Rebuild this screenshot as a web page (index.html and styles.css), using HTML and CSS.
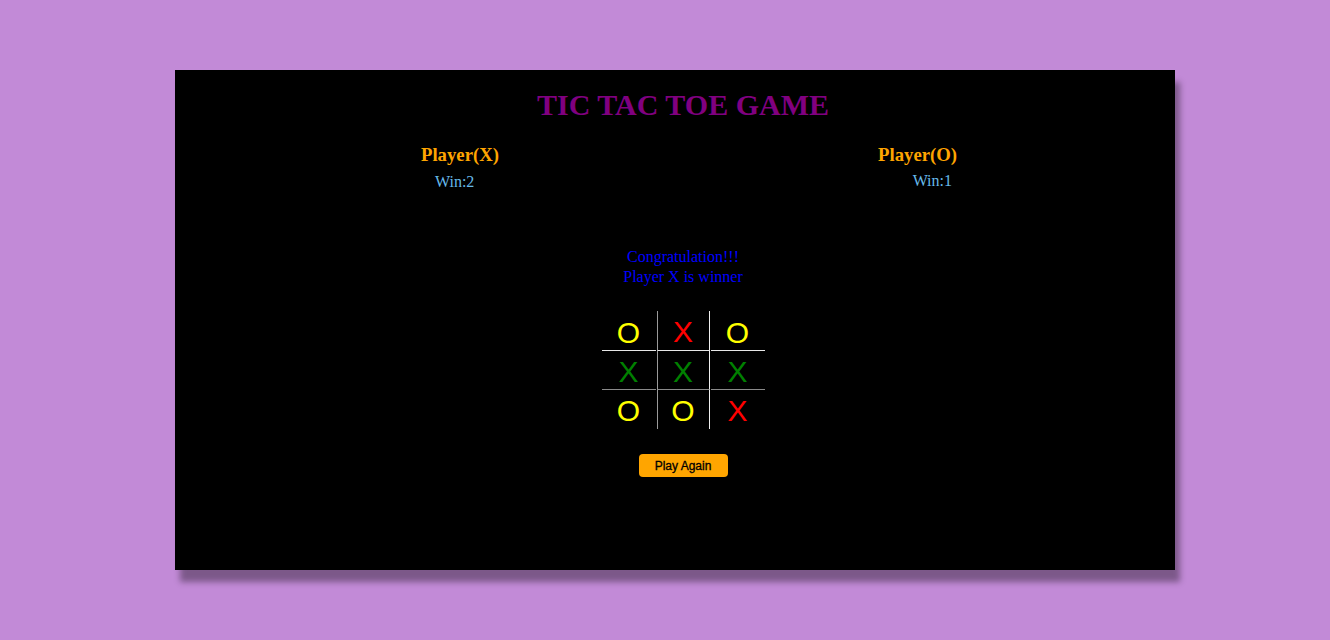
FILE: index.html
```html
<!DOCTYPE html>
<html>
<head>
<meta charset="utf-8">
<title>Tic Tac Toe</title>
<link rel="stylesheet" href="styles.css">
</head>
<body>
<div class="game">
  <h1 class="title">TIC TAC TOE GAME</h1>
  <div class="players">
    <div class="player player-x">
      <h3 class="player-name">Player(X)</h3>
      <div class="wins">Win:2</div>
    </div>
    <div class="player player-o">
      <h3 class="player-name">Player(O)</h3>
      <div class="wins">Win:1</div>
    </div>
  </div>
  <div class="center">
    <div class="message">Congratulation!!!<br>Player X is winner</div>
    <div class="board">
      <div class="cell c1 r1 o">O</div>
      <div class="cell c2 r1 xr">X</div>
      <div class="cell c3 r1 o">O</div>
      <div class="cell c1 r2 xg">X</div>
      <div class="cell c2 r2 xg">X</div>
      <div class="cell c3 r2 xg">X</div>
      <div class="cell c1 r3 o">O</div>
      <div class="cell c2 r3 o">O</div>
      <div class="cell c3 r3 xr">X</div>
    </div>
    <button class="again">Play Again</button>
  </div>
</div>
</body>
</html>
```

FILE: styles.css
```css
html, body {
  margin: 0;
  padding: 0;
}
body {
  background: #c28ad7;
  font-family: "Liberation Serif", "Times New Roman", serif;
  width: 1330px;
  height: 640px;
  overflow: hidden;
}
.game {
  box-sizing: border-box;
  width: 1000px;
  height: 500px;
  margin: 70px auto 0 175px;
  background: #000;
  box-shadow: 5px 12px 6px rgba(0, 0, 0, 0.36);
  display: flex;
  flex-direction: column;
  padding-top: 18px;
}
.title {
  margin: 0 0 0 16px;
  text-align: center;
  font-size: 30px;
  font-weight: bold;
  color: #800080;
  line-height: normal;
}
.players {
  display: flex;
  justify-content: space-between;
  padding: 0 218px 0 246px;
  margin-top: 22px;
}
.player-name {
  margin: 0;
  font-size: 18.72px;
  font-weight: bold;
  color: #ffa500;
}
.wins {
  margin-top: 7px;
  font-size: 16px;
  color: #66b9e9;
}
.player-x .wins {
  padding-left: 14px;
}
.player-o {
  text-align: right;
}
.player-o .wins {
  padding-right: 5px;
  margin-top: 6px;
}
.center {
  display: flex;
  flex-direction: column;
  align-items: center;
  padding-left: 16px;
}
.message {
  margin-top: 56px;
  text-align: center;
  font-size: 16px;
  line-height: 20px;
  color: #0000ff;
}
.board {
  margin-top: 24px;
  display: grid;
  grid-template-columns: 54px 53px 54px;
  grid-template-rows: 40px 39px 39px;
  column-gap: 1px;
}
.cell {
  box-sizing: border-box;
  display: flex;
  justify-content: center;
  align-items: flex-start;
  padding-top: 4px;
  font-family: "Liberation Sans", Arial, sans-serif;
  font-size: 30px;
  line-height: normal;
}
.r1 {
  border-bottom: 1px solid #e8e8e8;
}
.r2 {
  border-bottom: 1px solid #8a8a8a;
}
.c2 {
  border-left: 1px solid #9a9a9a;
  border-right: 1px solid #eeeeee;
}
.r1.c1, .r1.c3 {
  padding-top: 5px;
}
.o {
  color: #ffff00;
}
.xr {
  color: #ff0000;
}
.xg {
  color: #008000;
}
.again {
  margin-top: 25px;
  width: 89px;
  height: 23px;
  padding: 0;
  border: none;
  border-radius: 4px;
  background: #ffa500;
  color: #000;
  font-family: "Liberation Sans", Arial, sans-serif;
  font-size: 12px;
  font-weight: 500;
  -webkit-text-stroke: 0.3px #000;
  cursor: pointer;
}
```
